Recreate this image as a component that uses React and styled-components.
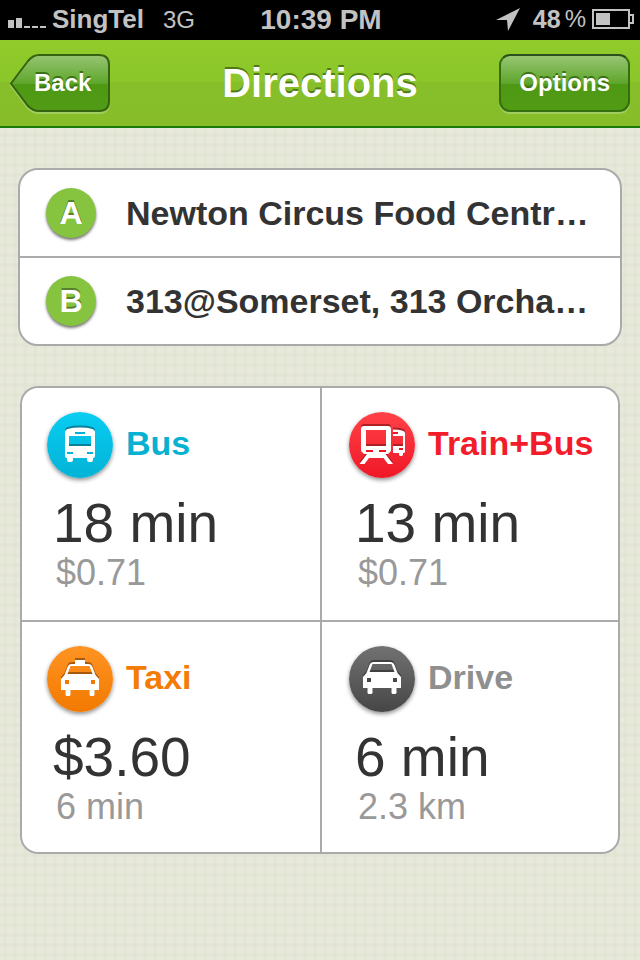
import React from "react";
import styled, { createGlobalStyle } from "styled-components";

const GlobalStyle = createGlobalStyle`
  *, *::before, *::after { box-sizing: border-box; }
  html { min-height: 100%; background: #e3e5d4; }
  body {
    margin: 0;
    font-family: "Liberation Sans", Arial, Helvetica, sans-serif;
    color: #333;
  }
  button { font: inherit; color: inherit; margin: 0; cursor: pointer; }
`;

const Page = styled.div`
  min-height: 100vh;
  background-color: #e8e9dc;
  background-image:
    linear-gradient(90deg, transparent 1px, rgba(225, 227, 209, 0.65) 3px, rgba(225, 227, 209, 0.65) 5px, transparent 7px),
    linear-gradient(transparent 1px, rgba(225, 227, 209, 0.65) 3px, rgba(225, 227, 209, 0.65) 5px, transparent 7px);
  background-size: 10px 10px;
  background-position: 1px 1px;
`;

const StatusBar = styled.div`
  display: grid;
  grid-template-columns: 1fr auto 1fr;
  align-items: center;
  height: 40px;
  padding: 0 6px 2px 8px;
  background: #000;
  color: #c2c2c2;
  font-size: 26px;
  font-weight: bold;
  line-height: 30px;
  white-space: nowrap;
`;

const StatusGroup = styled.div`
  display: flex;
  align-items: center;
  justify-content: ${(p) => (p.$end ? "flex-end" : "flex-start")};
`;

const Carrier = styled.span`
  margin: 0 19px 0 6px;
  font-size: 26px;
`;

const Network = styled.span`
  padding-top: 2px;
  font-size: 24px;
  font-weight: normal;
`;

const Clock = styled.time`
  padding-top: 2px;
  font-size: 28px;
`;

const Charge = styled.span`
  display: flex;
  gap: 4px;
  margin: 0 6px 0 13px;
  font-size: 25px;
`;

const Percent = styled.span`
  font-size: 24px;
  font-weight: normal;
`;

const NavBar = styled.header`
  display: grid;
  grid-template-columns: 1fr auto 1fr;
  align-items: center;
  height: 88px;
  padding: 0 10px;
  border-bottom: 2px solid #1c7a0c;
  background: linear-gradient(#91cb2b, #8bc62a 49%, #87bf2a 49%, #86bd29);
  color: #fff;
`;

const Title = styled.h1`
  margin: 0;
  font-size: 40px;
  line-height: 48px;
  text-shadow: 0 -2px 0 #4f7a16;
`;

const NavButton = styled.button`
  height: 58px;
  border: 0;
  padding: 0 20px;
  font-size: 24px;
  font-weight: bold;
  line-height: 28px;
  text-shadow: 0 -2px 0 #3b7214;
`;

const OptionsButton = styled(NavButton)`
  justify-self: end;
  border: 2px solid #34700f;
  border-top-color: #2b501c;
  border-radius: 11px;
  padding: 0 18px;
  background: linear-gradient(#98c573, #5ea62b 51%, #4e9914 51%, #519b15);
  box-shadow: 0 2px 0 #a2cd5f;
`;

const BackButton = styled(NavButton)`
  position: relative;
  isolation: isolate;
  justify-self: start;
  padding: 0 19px 0 24px;
  background: none;
`;

const BackShape = styled.svg`
  position: absolute;
  inset: 0;
  z-index: -1;
  overflow: visible;
`;

const Main = styled.main`
  padding: 40px 18px;
`;

const Places = styled.section`
  border: 2px solid #aaa;
  border-radius: 20px;
  background: #fff;
  overflow: hidden;
`;

const Place = styled.button`
  display: flex;
  align-items: center;
  gap: 30px;
  width: 100%;
  height: ${(p) => (p.$divided ? 88 : 86)}px;
  border: 0;
  border-top: ${(p) => (p.$divided ? "2px solid #aaa" : "0")};
  padding: 0 20px 0 26px;
  background: none;
  text-align: left;
`;

const Badge = styled.span`
  display: flex;
  flex: none;
  align-items: center;
  justify-content: center;
  width: 50px;
  height: 50px;
  border-radius: 50%;
  background: #86c43f;
  box-shadow: 0 2px 3px rgba(0, 0, 0, 0.55);
  color: #fff;
  font-size: 32px;
  font-weight: bold;
  line-height: 36px;
  text-shadow: 0 -2px 0 #56812a;
`;

const PlaceName = styled.span`
  font-size: 34px;
  font-weight: bold;
  line-height: 40px;
  white-space: nowrap;
`;

const Options = styled.section`
  display: grid;
  grid-template-columns: 1fr 1fr;
  margin: 40px 2px 0;
  border-radius: 18px;
  background: #fff;
`;

const radii = {
  tl: "18px 0 0 0",
  tr: "0 18px 0 0",
  bl: "0 0 0 18px",
  br: "0 0 18px 0",
};

const Tile = styled.button`
  display: flex;
  flex-direction: column;
  align-items: flex-start;
  height: 234px;
  border: 0 solid #aaa;
  border-top-width: 2px;
  border-left-width: 2px;
  border-right-width: ${(p) => (p.$corner[1] === "r" ? 2 : 0)}px;
  border-bottom-width: ${(p) => (p.$corner[0] === "b" ? 2 : 0)}px;
  border-radius: ${(p) => radii[p.$corner]};
  padding: 24px 0 0 ${(p) => (p.$corner[1] === "r" ? 27 : 25)}px;
  background: none;
  text-align: left;
  white-space: nowrap;
`;

const Mode = styled.span`
  display: flex;
  align-items: center;
  gap: 13px;
  color: ${(p) => p.$color};
`;

const Disc = styled.span`
  flex: none;
  width: 66px;
  height: 66px;
  border-radius: 50%;
  background: linear-gradient(${(p) => p.$from}, ${(p) => p.$to});
  box-shadow: 0 2px 4px rgba(0, 0, 0, 0.45);
`;

const Glyph = styled.svg`
  display: block;
`;

const Body = styled.g`
  fill: #fff;
  fill-rule: evenodd;
  filter: drop-shadow(0 -2px 0 ${(p) => p.$shade});
`;

const ModeName = styled.span`
  padding-bottom: 4px;
  font-size: 34px;
  font-weight: bold;
  line-height: 38px;
`;

const Value = styled.span`
  margin: 15px 0 0 6px;
  font-size: 55px;
  line-height: 60px;
`;

const Detail = styled.span`
  margin-left: 9px;
  color: #999;
  font-size: 36px;
  line-height: 40px;
`;

const carBody =
  "M14 33L17.500 29L20.500 21Q21.500 18 25 18H41Q44.500 18 45.500 21L48.500 29L52 33V44H47.500V49L46.500 50H43.500L42.500 49V44H23.500V49L22.500 50H19.500L18.500 49V44H14Z" +
  "M23.500 20H42.500L45.500 28H20.500Z";
const carLights = "M18 34H22V38H18ZM44 34H48V38H44Z";

const glyphs = {
  bus: {
    body: "M18 20Q18 15.500 33 15.500Q48 15.500 48 20V44Q48 46 46 46V48Q46 50 44 50H42Q40 50 40 48V46H26V48Q26 50 24 50H22Q20 50 20 48V46Q18 46 18 44ZM22 24V34H44V24Z",
    slots: "M28 20H38V22H28ZM20 40H26V42H20ZM40 40H46V42H40Z",
  },
  train: {
    body:
      "M15 14H39Q42 14 42 17V39L39 42H36.500L44 52H39L34.500 46H20L15.500 52H10.500L18 42H15L12 39V17Q12 14 15 14ZM17 18V34H37V18Z" +
      "M44 17.500Q56 17.500 56 21V40Q56 41 54 41V43L53 44H51L50 43V41H44V34H54V24H44Z",
    slots: "M17 38H24V40H17ZM30 38H37V40H30ZM44 20H49V22H44ZM50 36H54V38H50Z",
  },
  taxi: { body: `${carBody}M28 14H38V18H28Z`, slots: carLights },
  drive: { body: carBody, slots: carLights, lift: true },
};

const modes = [
  { id: "bus", corner: "tl", name: "Bus", value: "18 min", detail: "$0.71", color: "#06b1d2", from: "#08cdf2", to: "#03b3d6", shade: "#06829b" },
  { id: "train", corner: "tr", name: "Train+Bus", value: "13 min", detail: "$0.71", color: "#f21c2a", from: "#ff4248", to: "#ef1726", shade: "#af1f26" },
  { id: "taxi", corner: "bl", name: "Taxi", value: "$3.60", detail: "6 min", color: "#f47b06", from: "#ff9423", to: "#f27900", shade: "#a9590c" },
  { id: "drive", corner: "br", name: "Drive", value: "6 min", detail: "2.3 km", color: "#8f8f8f", from: "#727272", to: "#464646", shade: "#404040" },
];

const places = [
  { letter: "A", name: "Newton Circus Food Centr…" },
  { letter: "B", name: "313@Somerset, 313 Orcha…" },
];

function SignalIcon() {
  return (
    <svg width="38" height="20" viewBox="0 0 38 20" fill="#c2c2c2" aria-hidden="true">
      <path d="M0 11h6v8H0zM8 9h6v10H8zM16 17h6v2h-6zM24 17h6v2h-6zM32 17h6v2h-6z" />
    </svg>
  );
}

function LocationIcon() {
  return (
    <svg width="24" height="24" viewBox="0 0 24 24" fill="#c2c2c2" aria-hidden="true">
      <path d="M24 1L12 24L11 13L0 13Z" />
    </svg>
  );
}

function BatteryIcon() {
  return (
    <svg width="42" height="20" viewBox="0 0 42 20" aria-hidden="true">
      <path d="M1 1H37V6H41V14H37V19H1ZM37 6V14" fill="none" stroke="#c2c2c2" strokeWidth="2" />
      <path d="M4 4H18V16H4Z" fill="#c2c2c2" />
    </svg>
  );
}

function BackOutline() {
  const shape = "M1 29.500L18 7Q23 1 29 1H89Q99 1 99 11V47Q99 57 89 57H29Q23 57 18 52Z";
  return (
    <BackShape width="100" height="58" viewBox="0 0 100 58" aria-hidden="true">
      <defs>
        <linearGradient id="back-fill" x1="0" y1="0" x2="0" y2="1">
          <stop offset="0" stopColor="#98c573" />
          <stop offset="0.51" stopColor="#5ea62b" />
          <stop offset="0.51" stopColor="#4e9914" />
          <stop offset="1" stopColor="#519b15" />
        </linearGradient>
      </defs>
      <path d={shape} transform="translate(0 2)" fill="none" stroke="#a2cd5f" strokeWidth="2" />
      <path d={shape} fill="url(#back-fill)" stroke="#34640f" strokeWidth="2" />
    </BackShape>
  );
}

function ModeIcon({ mode }) {
  const glyph = glyphs[mode.id];
  return (
    <Disc $from={mode.from} $to={mode.to}>
      <Glyph width="66" height="66" viewBox="0 0 66 66" aria-hidden="true">
        <g transform={glyph.lift ? "translate(0 -2)" : undefined}>
          <Body $shade={mode.shade}>
            <path d={glyph.body} />
          </Body>
          <path d={glyph.slots} fill={mode.to} />
        </g>
      </Glyph>
    </Disc>
  );
}

export default function App() {
  return (
    <>
      <GlobalStyle />
      <Page>
        <StatusBar>
          <StatusGroup>
            <SignalIcon />
            <Carrier>SingTel</Carrier>
            <Network>3G</Network>
          </StatusGroup>
          <Clock>10:39 PM</Clock>
          <StatusGroup $end>
            <LocationIcon />
            <Charge>
              48<Percent>%</Percent>
            </Charge>
            <BatteryIcon />
          </StatusGroup>
        </StatusBar>
        <NavBar>
          <BackButton type="button">
            <BackOutline />
            Back
          </BackButton>
          <Title>Directions</Title>
          <OptionsButton type="button">Options</OptionsButton>
        </NavBar>
        <Main>
          <Places>
            {places.map((place, index) => (
              <Place key={place.letter} type="button" $divided={index > 0}>
                <Badge>{place.letter}</Badge>
                <PlaceName>{place.name}</PlaceName>
              </Place>
            ))}
          </Places>
          <Options>
            {modes.map((mode) => (
              <Tile key={mode.id} type="button" $corner={mode.corner}>
                <Mode $color={mode.color}>
                  <ModeIcon mode={mode} />
                  <ModeName>{mode.name}</ModeName>
                </Mode>
                <Value>{mode.value}</Value>
                <Detail>{mode.detail}</Detail>
              </Tile>
            ))}
          </Options>
        </Main>
      </Page>
    </>
  );
}
